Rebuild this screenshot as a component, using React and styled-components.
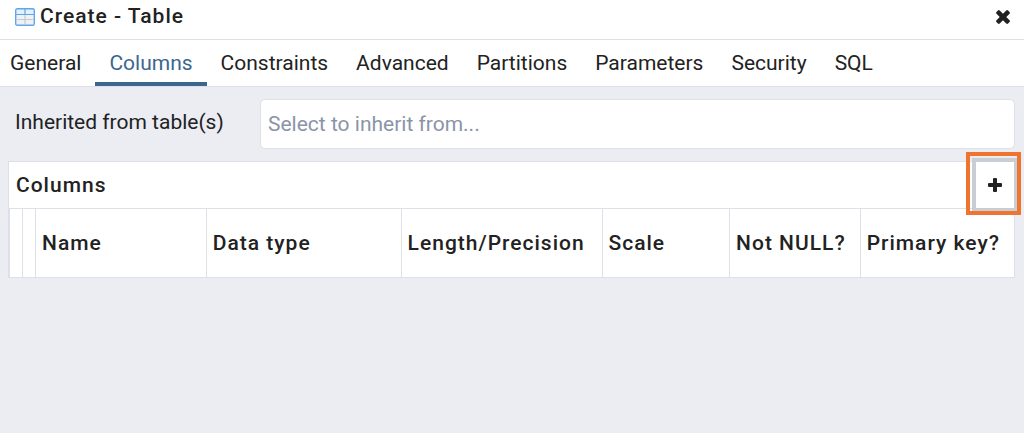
import React from "react";
import styled, { createGlobalStyle } from "styled-components";

const GlobalStyle = createGlobalStyle`
  *, *::before, *::after { box-sizing: border-box; }
  body {
    margin: 0;
    background: #ebedf3;
    color: #222222;
    font-family: Roboto, "Liberation Sans", sans-serif;
    font-size: 21px;
    line-height: 24px;
  }
  button, input { font: inherit; color: inherit; }
`;

const Dialog = styled.main`
  min-height: 100vh;
  background: #ebedf3;
`;

const TitleBar = styled.header`
  display: flex;
  align-items: center;
  gap: 5px;
  height: 40px;
  padding: 0 14px 6px 15px;
  background: #ffffff;
  border-bottom: 1px solid #dde0e6;
`;

const Title = styled.h1`
  flex: 1;
  margin: 0;
  padding-bottom: 2px;
  font-size: 21px;
  font-weight: 500;
  letter-spacing: 1px;
`;

const IconButton = styled.button`
  display: flex;
  align-items: center;
  justify-content: center;
  padding: 0;
  border: 0;
  background: #ffffff;
  cursor: pointer;
`;

const TabBar = styled.nav`
  display: flex;
  height: 47px;
  background: #ffffff;
  border-bottom: 1px solid #dde0e6;
`;

const Tab = styled.button`
  padding: 4px 14px 0;
  border: 0;
  border-bottom: 4px solid ${(p) => (p.$active ? "#3b678f" : "transparent")};
  background: none;
  color: ${(p) => (p.$active ? "#3b678f" : "#222222")};
  cursor: pointer;

  &:first-child { padding-left: 10px; }
`;

const Content = styled.div`
  padding: 12px 9px 0 8px;
`;

const Field = styled.div`
  display: grid;
  grid-template-columns: 245px 1fr;
  padding-left: 7px;
  margin-bottom: 12px;
`;

const Label = styled.label`
  padding-top: 11px;
`;

const TextBox = styled.input`
  width: 100%;
  height: 50px;
  padding: 0 7px;
  border: 1px solid #dde0e6;
  border-radius: 5px;
  background: #ffffff;

  &::placeholder { color: #8a94a8; opacity: 1; }
`;

const Panel = styled.section`
  border: 1px solid #dde0e6;
  background: #ffffff;
`;

const PanelHeader = styled.div`
  display: flex;
  align-items: stretch;
  justify-content: space-between;
  height: 46px;
`;

const PanelTitle = styled.h2`
  margin: 0;
  padding: 11px 7px;
  font-size: 21px;
  font-weight: 500;
  letter-spacing: 1px;
`;

const AddButton = styled(IconButton)`
  position: relative;
  width: 38px;
  box-shadow: 0 0 0 4px #c9cdd4;

  &::after {
    content: "";
    position: absolute;
    inset: -10px -7px -7px -10px;
    border: 4px solid #ee7430;
    pointer-events: none;
  }
`;

const Grid = styled.table`
  width: 100%;
  table-layout: fixed;
  border-collapse: collapse;
`;

const HeadCell = styled.th`
  width: ${(p) => p.$width};
  height: 68px;
  padding: 0 0 0 6px;
  border-left: 1px solid #dde0e6;
  border-top: 1px solid #dde0e6;
  font-weight: 500;
  letter-spacing: 1px;
  text-align: left;
  white-space: nowrap;
`;

const SpacerCell = styled.td`
  width: 13px;
  padding: 0;
  border-left: 1px solid #dde0e6;
  border-top: 1px solid #dde0e6;
`;

const TableIcon = () => (
  <svg width="20" height="18" viewBox="0 0 20 18" aria-hidden="true">
    <rect x="1" y="1" width="18" height="16" rx="1.5" fill="#f0f1f3" />
    <path d="M1 6.5V2.2Q1 1 2.2 1H17.8Q19 1 19 2.2V6.5Z" fill="#e4f1fd" />
    <path d="M2 11.5H18M10 7V16" stroke="#c6cbd1" strokeWidth="1.2" />
    <path d="M1 6.5H19M10 1V6.5" stroke="#5fa6ec" strokeWidth="1.2" />
    <rect x="0.7" y="0.7" width="18.6" height="16.6" rx="1.6" fill="none" stroke="#5fa6ec" strokeWidth="1.4" />
  </svg>
);

const CloseIcon = () => (
  <svg width="14" height="14" viewBox="0 0 14 14" aria-hidden="true">
    <g fill="#222222" transform="rotate(45 7 7)">
      <rect x="4.7" y="-1.2" width="4.6" height="16.4" rx="1.3" />
      <rect x="-1.2" y="4.7" width="16.4" height="4.6" rx="1.3" />
    </g>
  </svg>
);

const PlusIcon = () => (
  <svg width="14" height="14" viewBox="0 0 14 14" aria-hidden="true">
    <g fill="#222222">
      <rect x="5" y="0" width="4" height="14" rx="1" />
      <rect x="0" y="5" width="14" height="4" rx="1" />
    </g>
  </svg>
);

const tabs = ["General", "Columns", "Constraints", "Advanced", "Partitions", "Parameters", "Security", "SQL"];

const columns = [
  { name: "Name", width: "17%" },
  { name: "Data type", width: "19.4%" },
  { name: "Length/Precision", width: "20%" },
  { name: "Scale", width: "12.7%" },
  { name: "Not NULL?", width: "13%" },
  { name: "Primary key?", width: "auto" },
];

export default function App() {
  return (
    <Dialog>
      <GlobalStyle />
      <TitleBar>
        <TableIcon />
        <Title>Create - Table</Title>
        <IconButton type="button" aria-label="Close">
          <CloseIcon />
        </IconButton>
      </TitleBar>
      <TabBar>
        {tabs.map((tab) => (
          <Tab key={tab} type="button" $active={tab === "Columns"}>{tab}</Tab>
        ))}
      </TabBar>
      <Content>
        <Field>
          <Label htmlFor="inherits">Inherited from table(s)</Label>
          <TextBox id="inherits" type="text" placeholder="Select to inherit from..." />
        </Field>
        <Panel>
          <PanelHeader>
            <PanelTitle>Columns</PanelTitle>
            <AddButton type="button" aria-label="Add row">
              <PlusIcon />
            </AddButton>
          </PanelHeader>
          <Grid>
            <thead>
              <tr>
                <SpacerCell />
                <SpacerCell />
                {columns.map((c) => (
                  <HeadCell key={c.name} scope="col" $width={c.width}>{c.name}</HeadCell>
                ))}
              </tr>
            </thead>
          </Grid>
        </Panel>
      </Content>
    </Dialog>
  );
}
